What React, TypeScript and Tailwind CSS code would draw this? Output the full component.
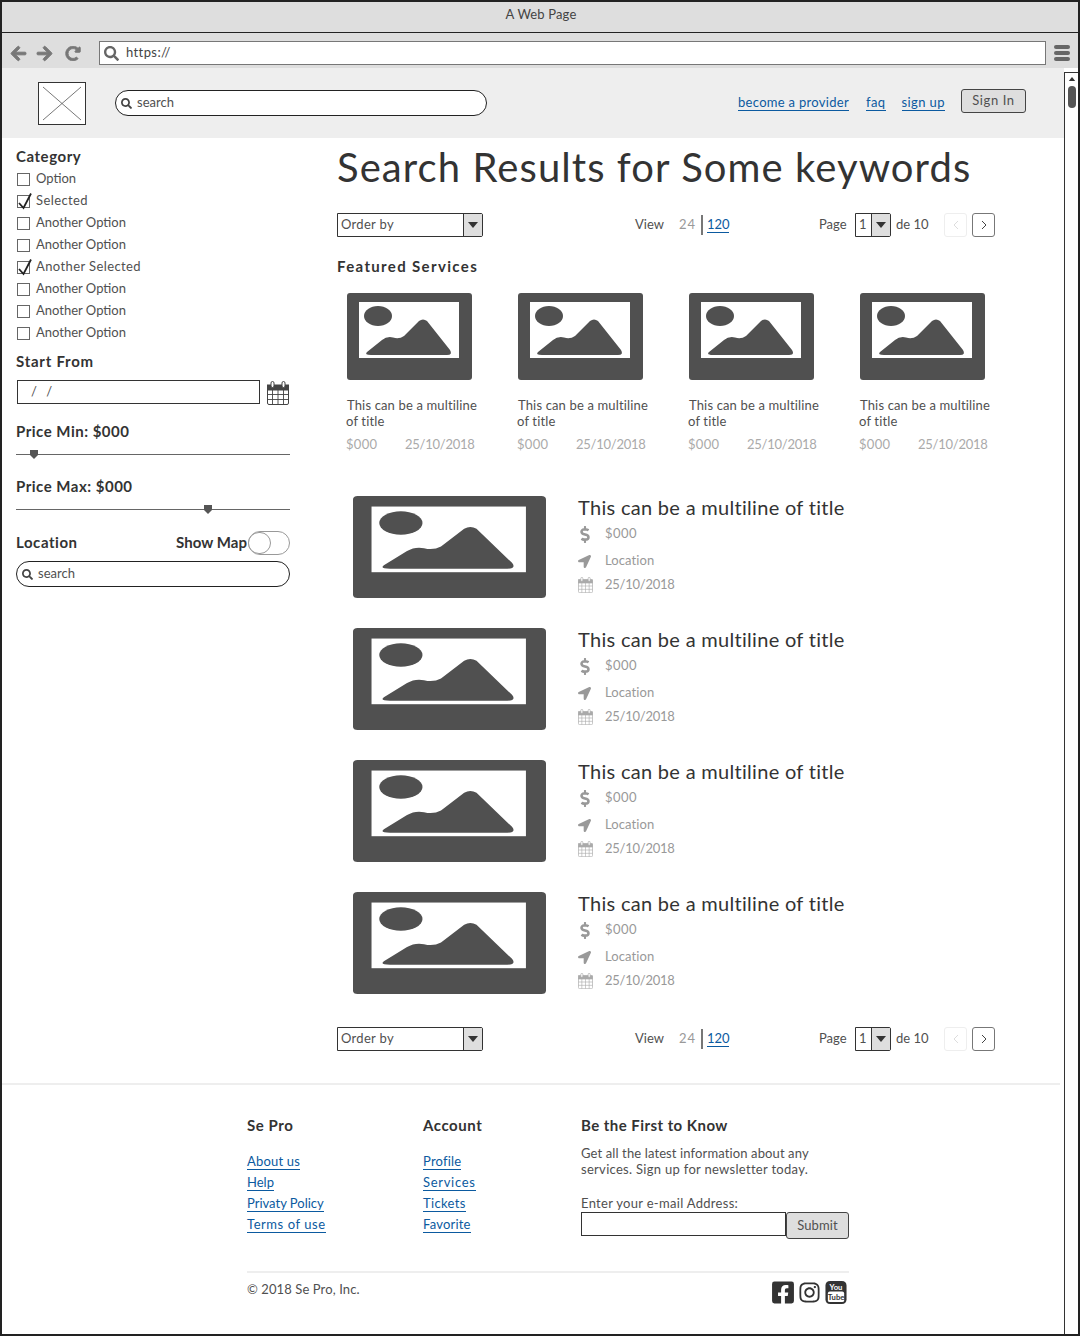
import React from "react";
import { FaArrowLeft, FaArrowRight, FaRedoAlt, FaSearch, FaLocationArrow, FaDollarSign, FaFacebookSquare, FaInstagram } from "react-icons/fa";

const Placeholder = ({ cls }: { cls: string }) => (
  <svg viewBox="0 0 125 87" preserveAspectRatio="none" className={cls}>
    <rect x="0" y="0" width="125" height="87" rx="3" fill="#505050" />
    <rect x="12" y="9" width="100" height="56" fill="#fff" />
    <ellipse cx="31" cy="23" rx="14" ry="10" fill="#505050" />
    <path d="M20 59 L35 47 Q40 43 46 44.5 Q52 46.5 57 43 L72 28 Q76 25 80 28 L103 57 Q106 62 100 62 L24 62 Q17 62 20 59Z" fill="#505050" />
  </svg>
);

const Calendar = ({ cls, color }: { cls: string; color: string }) => (
  <svg viewBox="0 0 22 24" className={cls} fill="none" stroke={color}>
    <rect x="0.5" y="4.5" width="21" height="19" rx="1.5" fill="#fff" />
    <rect x="0.5" y="4" width="21" height="5" fill={color} />
    <rect x="4" y="0.5" width="3" height="6" rx="1.5" fill="#fff" />
    <rect x="15" y="0.5" width="3" height="6" rx="1.5" fill="#fff" />
    <path d="M0.5 13.5H21.5M0.5 18.5H21.5M5.5 9V23.5M11 9V23.5M16.5 9V23.5" strokeWidth="0.9" />
  </svg>
);

const Check = ({ label, on }: { label: string; on?: boolean }) => (
  <div className={`flex h-[22px] items-center text-[13px] text-[#505050] ${on ? "tracking-[0.4px]" : "tracking-normal"}`}>
    <span className="relative ml-[1px] mr-[6px] h-[13px] w-[13px] border border-[#666] bg-white">
      {on && (
        <svg viewBox="0 0 16 18" className="absolute left-[-1px] top-[-4px] h-[18px] w-[16px]" fill="none" stroke="#222" strokeWidth="1.8">
          <path d="M2 11 L6.5 16 L14 1.5" />
        </svg>
      )}
    </span>
    {label}
  </div>
);

const Pill = ({ cls }: { cls: string }) => (
  <div className={`flex h-[26px] items-center rounded-[13px] border-[1.5px] border-[#222] bg-white pl-[5px] text-[13px] text-[#505050] ${cls}`}>
    <FaSearch className="mr-[5px] h-[11px] w-[11px] text-[#444]" />
    search
  </div>
);

const Slider = ({ pos }: { pos: string }) => (
  <div className="relative flex h-[22px] items-center">
    <div className="h-px w-full bg-[#666]" />
    <svg viewBox="0 0 10 9" className={`absolute top-[7px] h-[9px] w-[10px] ${pos}`}>
      <path d="M1 0H9V5L5 9L1 5Z" fill="#555" />
    </svg>
  </div>
);

const Heading = ({ children, cls = "tracking-[0.55px]" }: { children: React.ReactNode; cls?: string }) => (
  <div className={`flex h-[22px] items-center pb-[2px] text-[15px] font-bold leading-none text-[#333] ${cls}`}>{children}</div>
);

const SelectBox = ({ label, cls, arrowCls }: { label: string; cls: string; arrowCls: string }) => (
  <div className={`flex h-[24px] items-center rounded-r-[2px] border border-[#333] bg-white text-[13px] text-[#505050] ${cls}`}>
    <span className="flex-1 pl-[3px] tracking-[0.3px]">{label}</span>
    <span className={`flex h-full items-center justify-center border-l border-[#333] bg-[#dedede] ${arrowCls}`}>
      <svg viewBox="0 0 10 6" className="h-[6px] w-[10px]"><path d="M0 0H10L5 6Z" fill="#333" /></svg>
    </span>
  </div>
);

const Pager = () => (
  <div className="flex h-[24px] items-center text-[13px] text-[#505050]">
    <SelectBox label="Order by" cls="w-[146px]" arrowCls="w-[19px]" />
    <span className="ml-[152px] w-[44px] tracking-normal">View</span>
    <span className="w-[22px] tracking-[1px] text-[#999]">24</span>
    <span className="h-[20px] w-[2px] bg-[#777]" />
    <a className="ml-[4px] w-[22px] border-b border-[#0b5aa0] leading-[15px] tracking-normal text-[#0b5aa0]">120</a>
    <span className="ml-[90px] w-[36px]">Page</span>
    <SelectBox label="1" cls="w-[36px]" arrowCls="w-[19px]" />
    <span className="ml-[5px] w-[48px]">de 10</span>
    <span className="flex h-[24px] w-[23px] items-center justify-center rounded-[3px] border border-[#eee] text-[#ddd]">
      <svg viewBox="0 0 6 10" className="h-[10px] w-[6px]" fill="none" stroke="currentColor"><path d="M5 1L1 5L5 9" /></svg>
    </span>
    <span className="ml-[5px] flex h-[24px] w-[23px] items-center justify-center rounded-[3px] border-[1.5px] border-[#777] text-[#444]">
      <svg viewBox="0 0 6 10" className="h-[10px] w-[6px]" fill="none" stroke="currentColor"><path d="M1 1L5 5L1 9" /></svg>
    </span>
  </div>
);

const Card = () => (
  <div className="w-[171px]">
    <Placeholder cls="block h-[87px] w-[125px]" />
    <div className="-ml-[1px] mt-[17px] text-[13px] leading-[16px] tracking-[0.15px] text-[#505050]">
      <div className="pl-[1px]">This can be a multiline</div>
      <div>of title</div>
    </div>
    <div className="-ml-[1px] mt-[5px] flex h-[22px] items-center text-[13px] text-[#aaa]">
      <span className="w-[59px] tracking-[0.3px]">$000</span>
      <span className="tracking-[-0.25px]">25/10/2018</span>
    </div>
  </div>
);

const Meta = ({ icon, text, cls }: { icon: React.ReactNode; text: string; cls: string }) => (
  <div className={`flex items-center text-[13px] text-[#999] ${cls}`}>
    <span className="flex w-[27px] justify-start">{icon}</span>
    {text}
  </div>
);

const ListItem = () => (
  <div className="flex h-[102px]">
    <Placeholder cls="block h-[102px] w-[193px]" />
    <div className="ml-[32px]">
      <div className="flex h-[22px] items-center text-[20px] leading-none tracking-[0.3px] text-[#333]">This can be a multiline of title</div>
      <Meta cls="mt-[3px] h-[26px] tracking-[0.5px]" text="$000" icon={<FaDollarSign className="ml-[1px] h-[17px] w-[12px] text-[#999]" />} />
      <Meta cls="mt-[1px] h-[26px] tracking-[0.1px]" text="Location" icon={<FaLocationArrow className="h-[13px] w-[13px] text-[#999]" />} />
      <Meta cls="h-[22px] tracking-[-0.25px]" text="25/10/2018" icon={<Calendar cls="h-[16px] w-[15px]" color="#aaa" />} />
    </div>
  </div>
);

const FootLink = ({ children, cls = "tracking-[0.2px]" }: { children: React.ReactNode; cls?: string }) => (
  <div className="flex h-[21px] items-center text-[13px]">
    <a className={`border-b border-[#0b5aa0] leading-[15px] text-[#0b5aa0] ${cls}`}>{children}</a>
  </div>
);

export default function App() {
  return (
    <div className="flex h-[1336px] w-[1080px] flex-col overflow-hidden border-2 border-b-2 border-[#222] bg-white font-['Lato','Liberation_Sans',sans-serif]">
      <div className="flex h-[31px] justify-center border-b border-[#222] bg-[#dedede] pl-[2px] pt-[3px] text-[13px] leading-[18px] tracking-[0.15px] text-[#444]">A Web Page</div>
      <div className="flex h-[35px] items-center bg-[#dedede] pl-[8px] pt-[5px] text-[#777]">
        <FaArrowLeft className="h-[17px] w-[17px] stroke-current stroke-[30]" />
        <FaArrowRight className="ml-[9px] h-[17px] w-[17px] stroke-current stroke-[30]" />
        <FaRedoAlt className="ml-[12px] h-[15px] w-[16px] stroke-current stroke-[30]" />
        <div className="ml-[18px] flex h-[24px] w-[947px] items-center border border-[#777] bg-white pl-[4px] text-[13px] tracking-[0.4px] text-[#444]">
          <FaSearch className="mr-[7px] h-[15px] w-[15px] text-[#666]" />
          https://
        </div>
        <div className="ml-[8px] flex w-[16px] flex-col gap-[2px]">
          <span className="h-[4px] rounded-[2px] bg-[#666]" />
          <span className="h-[4px] rounded-[2px] bg-[#666]" />
          <span className="h-[4px] rounded-[2px] bg-[#666]" />
        </div>
      </div>
      <div className="flex flex-1">
        <div className="w-[1062px]">
          <header className="flex h-[70px] items-center bg-[#eeeeee] pl-[36px] text-[13px]">
            <svg viewBox="0 0 48 43" className="h-[43px] w-[48px]">
              <rect x="0.5" y="0.5" width="47" height="42" fill="#fff" stroke="#333" />
              <path d="M5 5L43 38M43 5L5 38" stroke="#555" strokeWidth="0.8" />
            </svg>
            <Pill cls="ml-[29px] w-[372px]" />
            <a className="ml-[251px] border-b border-[#0b5aa0] leading-[15px] tracking-[0.3px] text-[#0b5aa0]">become a provider</a>
            <a className="ml-[17px] border-b border-[#0b5aa0] leading-[15px] tracking-[0.4px] text-[#0b5aa0]">faq</a>
            <a className="ml-[16px] border-b border-[#0b5aa0] leading-[15px] tracking-[0.4px] text-[#0b5aa0]">sign up</a>
            <button className="mb-[5px] ml-[16px] h-[24px] w-[65px] rounded-[3px] border border-[#444] bg-[#dedede] text-[13px] tracking-[0.6px] text-[#505050]">Sign In</button>
          </header>
          <div className="flex">
            <aside className="w-[288px] pl-[14px] pt-[8px]">
              <Heading>Category</Heading>
              {[["Option"], ["Selected", 1], ["Another Option"], ["Another Option"], ["Another Selected", 1], ["Another Option"], ["Another Option"], ["Another Option"]].map((o, i) => (
                <Check key={i} label={o[0] as string} on={!!o[1]} />
              ))}
              <div className="mt-[7px]"><Heading cls="tracking-[0.75px]">Start From</Heading></div>
              <div className="mt-[7px] flex h-[25px] items-start">
                <div className="ml-[1px] flex h-[24px] w-[243px] items-center border border-[#333] bg-white pl-[13px] text-[13px] tracking-[3px] text-[#505050]">/ /</div>
                <Calendar cls="ml-[7px] mt-[1px] h-[24px] w-[22px]" color="#444" />
              </div>
              <div className="mt-[16px]"><Heading cls="tracking-[0.5px]">Price Min: $000</Heading></div>
              <Slider pos="left-[13px]" />
              <div className="mt-[11px]"><Heading cls="tracking-[0.5px]">Price Max: $000</Heading></div>
              <Slider pos="left-[187px]" />
              <div className="mt-[11px] flex h-[24px] items-center">
                <Heading>Location</Heading>
                <div className="ml-auto flex h-[24px] items-center">
                  <Heading cls="tracking-[0.05px]">Show Map</Heading>
                  <span className="ml-[1px] flex h-[24px] w-[42px] rounded-[12px] border-[1.5px] border-[#999] bg-white">
                    <span className="-ml-[1px] h-full w-[23px] rounded-full border-[1.5px] border-[#999] bg-white" />
                  </span>
                </div>
              </div>
              <Pill cls="mt-[6px] w-full" />
            </aside>
            <main className="ml-[47px] pt-[5px]">
              <h1 className="h-[48px] whitespace-nowrap text-[40px] leading-[48px] tracking-[1.07px] text-[#333]">Search Results for Some keywords</h1>
              <div className="mt-[22px]"><Pager /></div>
              <div className="mt-[19px]"><Heading cls="tracking-[1.35px]">Featured Services</Heading></div>
              <div className="mt-[15px] flex pl-[10px]">
                <Card /><Card /><Card /><Card />
              </div>
              <div className="mt-[40px] flex flex-col gap-[30px] pl-[16px]">
                <ListItem /><ListItem /><ListItem /><ListItem />
              </div>
              <div className="mt-[33px]"><Pager /></div>
            </main>
          </div>
          <div className="mt-[32px] h-[2px] w-[1058px] bg-[#eeeeee]" />
          <footer className="ml-[245px] mt-[30px] w-[602px]">
            <div className="flex">
              <div className="w-[176px]">
                <Heading>Se Pro</Heading>
                <div className="mt-[14px]">
                  <FootLink>About us</FootLink>
                  <FootLink cls="tracking-normal">Help</FootLink>
                  <FootLink cls="tracking-normal">Privaty Policy</FootLink>
                  <FootLink cls="tracking-[0.55px]">Terms of use</FootLink>
                </div>
              </div>
              <div className="w-[158px]">
                <Heading>Account</Heading>
                <div className="mt-[14px]">
                  <FootLink>Profile</FootLink>
                  <FootLink cls="tracking-[0.7px]">Services</FootLink>
                  <FootLink cls="tracking-[0.35px]">Tickets</FootLink>
                  <FootLink>Favorite</FootLink>
                </div>
              </div>
              <div className="w-[268px]">
                <Heading cls="tracking-[0.45px]">Be the First to Know</Heading>
                <div className="mt-[8px] text-[13px] leading-[16px] tracking-[0.3px] text-[#505050]">
                  <div className="tracking-[0.12px]">Get all the latest information about any</div>
                  <div>services. Sign up for newsletter today.</div>
                </div>
                <div className="mt-[18px] text-[13px] leading-[16px] tracking-[0.3px] text-[#505050]">Enter your e-mail Address:</div>
                <div className="mt-[1px] flex items-start">
                  <div className="h-[24px] w-[205px] border border-[#333] bg-white" />
                  <button className="h-[27px] w-[63px] rounded-[3px] border border-[#444] bg-[#dedede] text-[13px] tracking-[0.1px] text-[#505050]">Submit</button>
                </div>
              </div>
            </div>
            <div className="mt-[32px] h-[2px] bg-[#eeeeee]" />
            <div className="mt-[7px] flex h-[24px] items-center justify-between pr-[2px]">
              <span className="mb-[4px] text-[13px] tracking-[0.1px] text-[#505050]">© 2018 Se Pro, Inc.</span>
              <div className="flex items-center gap-[4px] text-[#333]">
                <FaFacebookSquare className="h-[25px] w-[22px]" />
                <FaInstagram className="h-[23px] w-[23px]" />
                <svg viewBox="0 0 22 24" className="h-[23px] w-[22px]">
                  <path d="M5 0H17Q22 0 22 5V19Q22 24 17 24H5Q0 24 0 19V5Q0 0 5 0Z" fill="#333" />
                  <rect x="2.5" y="11" width="17" height="11" rx="2" fill="#fff" />
                  <text x="11" y="9" textAnchor="middle" fontSize="8" fontWeight="700" fill="#fff">You</text>
                  <text x="11" y="19.5" textAnchor="middle" fontSize="8" fontWeight="700" fill="#333">Tube</text>
                </svg>
              </div>
            </div>
          </footer>
        </div>
        <div className="mt-[4px] flex w-[14px] flex-col items-center border-l border-t border-[#333] bg-white">
          <svg viewBox="0 0 8 5" className="mt-[4px] h-[4px] w-[8px]"><path d="M0 5L4 0L8 5Z" fill="#333" /></svg>
          <span className="mt-[5px] h-[22px] w-[8px] rounded-[4px] bg-[#555]" />
        </div>
      </div>
    </div>
  );
}
